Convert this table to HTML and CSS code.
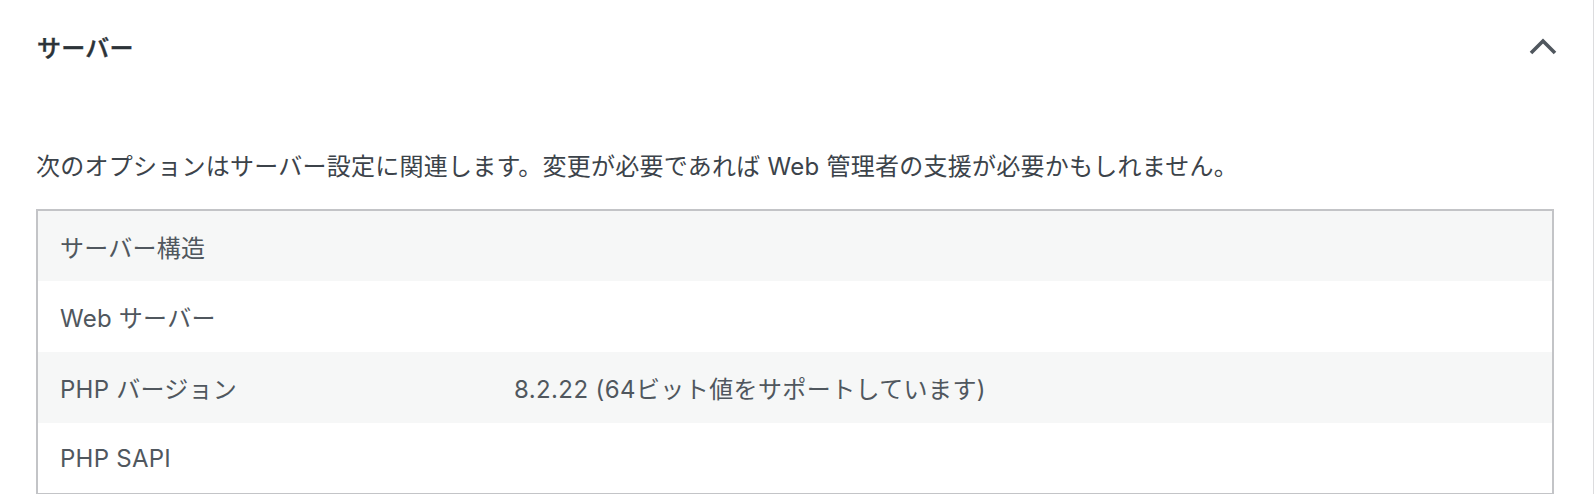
FILE: index.html
```html
<!DOCTYPE html>
<html lang="ja">
<head>
    <meta charset="UTF-8">
    <meta name="viewport" content="width=device-width, initial-scale=1.0">
    <title>サイトヘルス情報</title>
    <link rel="stylesheet" href="styles.css">
</head>
<body>
    <div class="panel">
        <div class="section-header">
            <h2>サーバー</h2>
            <button class="toggle" aria-expanded="true">
                <svg width="28" height="17" viewBox="0 0 28 17">
                    <polyline points="2,15 14,3 26,15" fill="none" stroke="#50575e" stroke-width="3.6"/>
                </svg>
            </button>
        </div>

        <div class="section-body">
            <p class="description">次のオプションはサーバー設定に関連します。変更が必要であれば Web 管理者の支援が必要かもしれません。</p>

            <table class="info-table">
                <colgroup>
                    <col class="label-col">
                    <col>
                </colgroup>
                <tbody>
                    <tr>
                        <td>サーバー構造</td>
                        <td></td>
                    </tr>
                    <tr>
                        <td>Web サーバー</td>
                        <td></td>
                    </tr>
                    <tr>
                        <td>PHP バージョン</td>
                        <td>8.2.22 (64ビット値をサポートしています)</td>
                    </tr>
                    <tr>
                        <td>PHP SAPI</td>
                        <td></td>
                    </tr>
                </tbody>
            </table>
        </div>
    </div>
</body>
</html>
```

FILE: styles.css
```css
* {
    margin: 0;
    padding: 0;
    box-sizing: border-box;
}

body {
    background: #fff;
    color: #3c434a;
    font-family: 'Inter', 'Noto Sans CJK JP', sans-serif;
    font-size: 24px;
    letter-spacing: 0.25px;
    overflow: hidden;
}

.panel {
    min-height: 494px;
    border-right: 1px solid #dcdcde;
}

.section-header {
    display: flex;
    justify-content: space-between;
    align-items: center;
    height: 92px;
    padding: 0 36px 0 37px;
}

.section-header h2 {
    font-size: 24px;
    font-weight: 500;
    color: #2c3338;
    -webkit-text-stroke: 0.4px #2c3338;
}

.toggle {
    display: flex;
    border: none;
    background: none;
    cursor: pointer;
}

.section-body {
    padding: 0 39px 0 36px;
}

.description {
    line-height: 36px;
    margin: 57px 0 24px;
}

.info-table {
    width: 100%;
    border: 2px solid #c3c4c7;
    border-collapse: collapse;
    table-layout: fixed;
    color: #50575e;
}

.label-col {
    width: 455px;
}

.info-table td {
    height: 71px;
    padding: 0 22px;
    vertical-align: middle;
}

.info-table td + td {
    letter-spacing: 0.4px;
}

.info-table tr:nth-child(odd) {
    background: #f6f7f7;
}
```
